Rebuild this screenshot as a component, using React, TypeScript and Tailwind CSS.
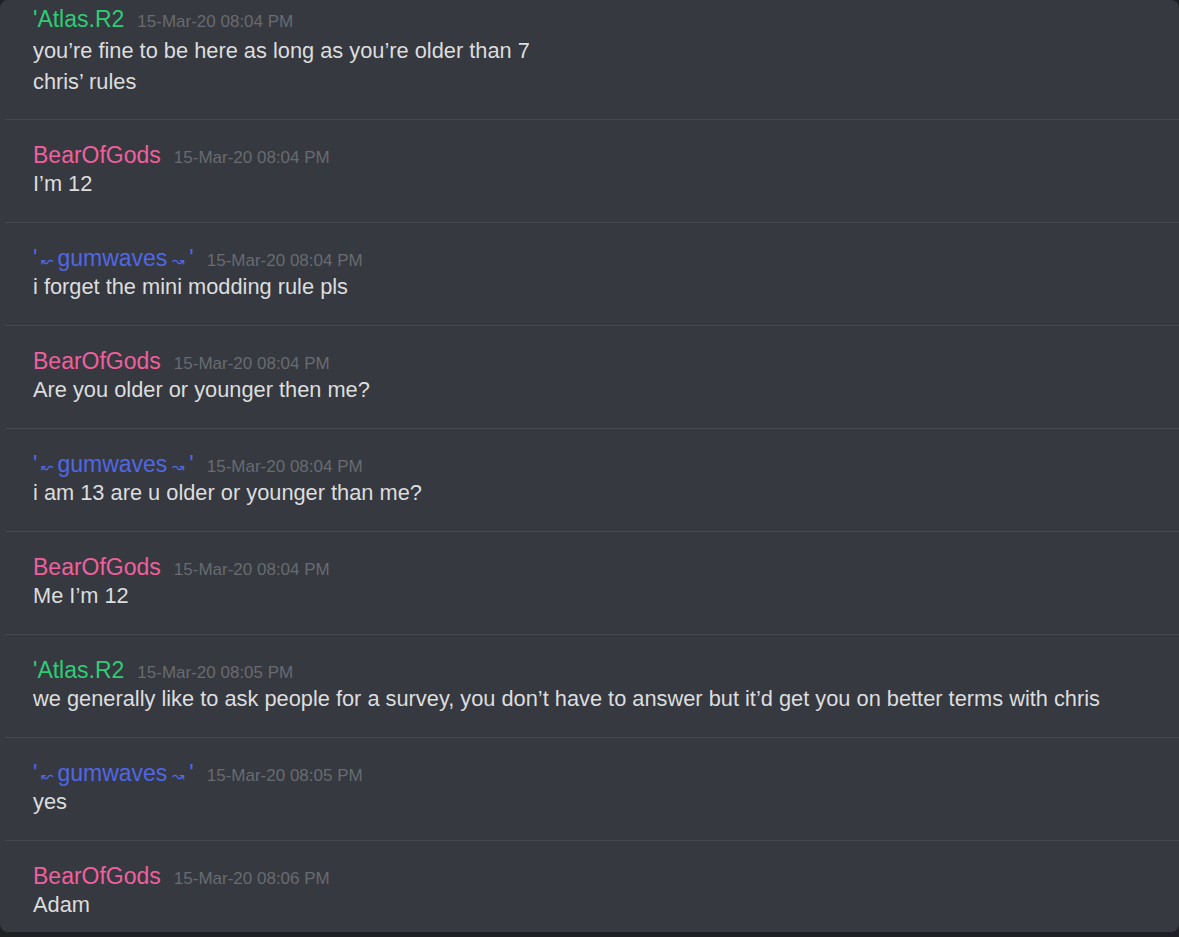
const MESSAGES = [
  { user: "atlas", time: "15-Mar-20 08:04 PM", lines: ["you’re fine to be here as long as you’re older than 7", "chris’ rules"] },
  { user: "bear", time: "15-Mar-20 08:04 PM", lines: ["I’m 12"] },
  { user: "gum", time: "15-Mar-20 08:04 PM", lines: ["i forget the mini modding rule pls"] },
  { user: "bear", time: "15-Mar-20 08:04 PM", lines: ["Are you older or younger then me?"] },
  { user: "gum", time: "15-Mar-20 08:04 PM", lines: ["i am 13 are u older or younger than me?"] },
  { user: "bear", time: "15-Mar-20 08:04 PM", lines: ["Me I’m 12"] },
  {
    user: "atlas",
    time: "15-Mar-20 08:05 PM",
    lines: ["we generally like to ask people for a survey, you don’t have to answer but it’d get you on better terms with chris"],
  },
  { user: "gum", time: "15-Mar-20 08:05 PM", lines: ["yes"] },
  { user: "bear", time: "15-Mar-20 08:06 PM", lines: ["Adam"] },
];

function Name({ user }: { user: string }) {
  if (user === "atlas") return <span className="text-[#2fcc76]">'Atlas.R2</span>;
  if (user === "bear") return <span className="text-[#f0609e]">BearOfGods</span>;
  return (
    <span className="text-[#5067e6]">
      '<span className="inline-block w-[20px] text-center text-[15px]">↜</span>gumwaves
      <span className="inline-block w-[22px] text-center text-[15px]">↝</span>'
    </span>
  );
}

export default function App() {
  return (
    <div className="h-[937px] w-[1179px] overflow-hidden bg-[#1f2023] font-['Liberation_Sans',Arial,sans-serif]">
      <div className="h-[932px] overflow-hidden rounded-lg bg-[#36393f]">
        <div className="-mt-[16px]">
          {MESSAGES.map((m, i) => (
            <div key={i} className={i > 0 ? "ml-[5px] border-t border-[#45484e]" : "ml-[5px]"}>
              <div className={i > 0 ? "pl-[28px] pt-[21px] pb-[23px]" : "pl-[28px] pt-[21px] pb-[22px]"}>
                <div className="flex h-[28px] items-baseline text-[23px] leading-[28px]">
                  <Name user={m.user} />
                  <span className="ml-[13px] text-[17px] leading-[28px] text-[#686b71]">{m.time}</span>
                </div>
                <div className={i > 0 ? "" : "mt-[2px]"}>
                  {m.lines.map((l, j) => (
                    <div
                      key={j}
                      className={
                        i > 0
                          ? "h-[30px] text-[21.8px] leading-[30px] text-[#dcddde]"
                          : "h-[31px] text-[21.8px] leading-[31px] text-[#dcddde]"
                      }
                    >
                      {l}
                    </div>
                  ))}
                </div>
              </div>
            </div>
          ))}
        </div>
      </div>
    </div>
  );
}
